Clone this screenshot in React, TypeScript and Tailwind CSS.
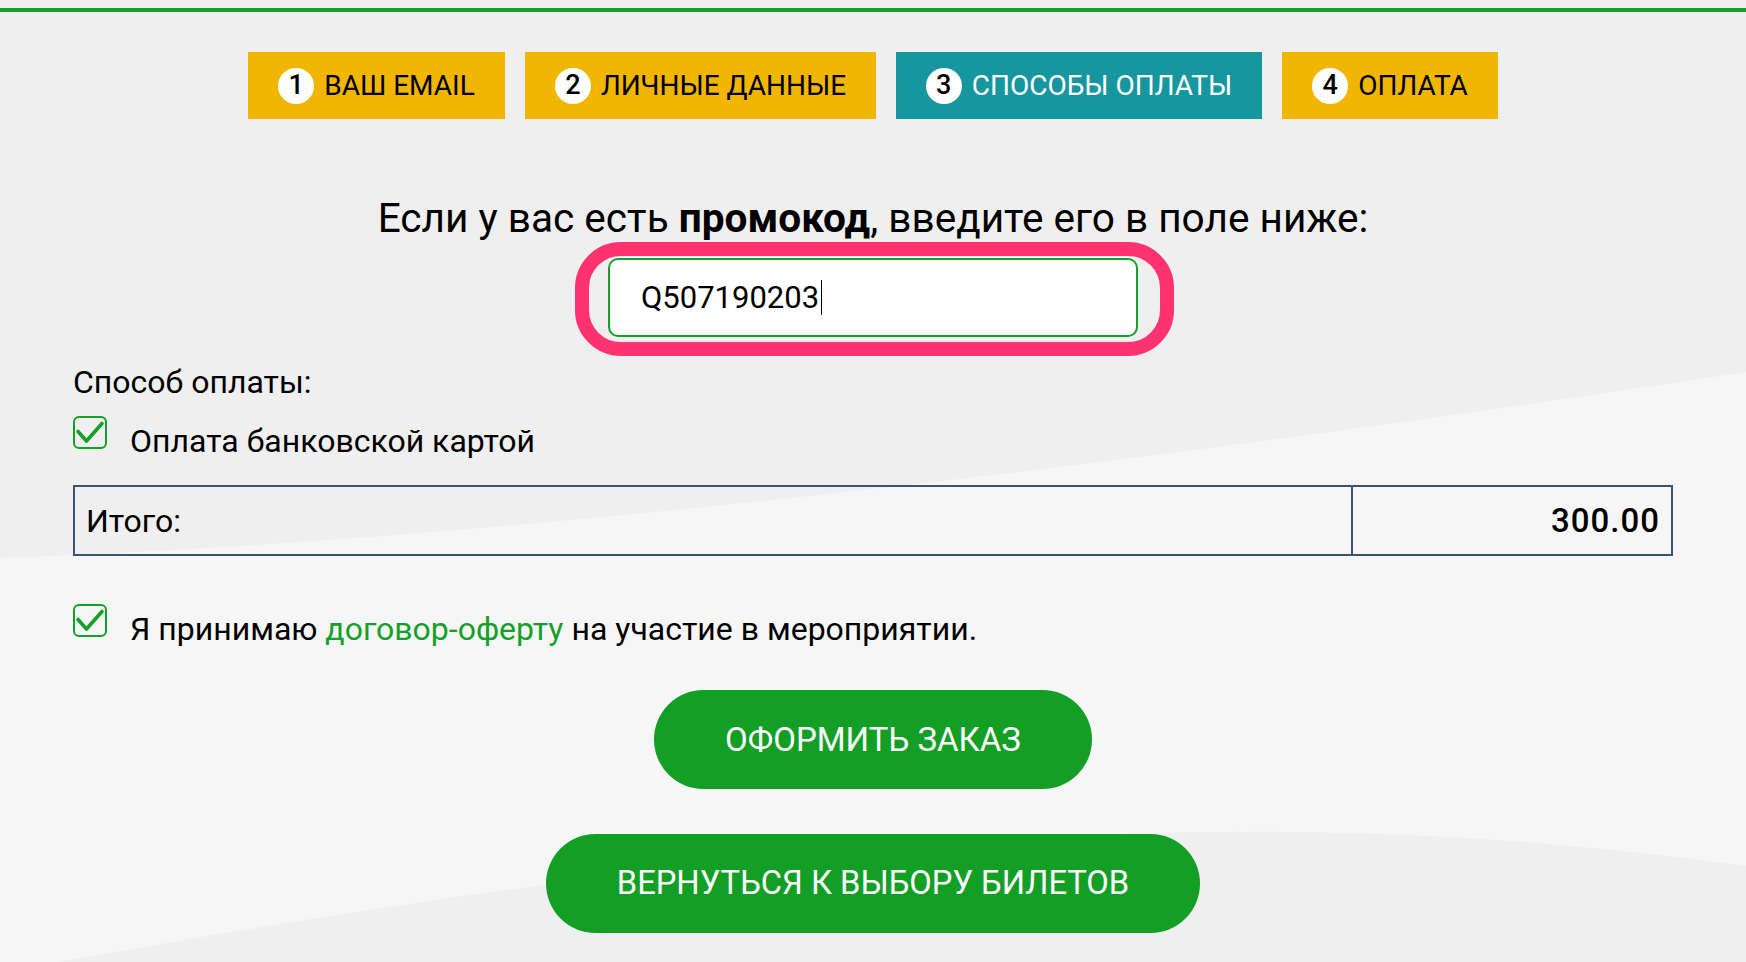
import React from "react";

type Step = { n: number; label: string; box: string; text: string };

const steps: Step[] = [
  { n: 1, label: "ВАШ EMAIL", box: "w-[257px] bg-[#f1b601]", text: "text-black" },
  { n: 2, label: "ЛИЧНЫЕ ДАННЫЕ", box: "w-[351px] bg-[#f1b601]", text: "text-black" },
  { n: 3, label: "СПОСОБЫ ОПЛАТЫ", box: "w-[366px] bg-[#16969f]", text: "text-white" },
  { n: 4, label: "ОПЛАТА", box: "w-[216px] bg-[#f1b601]", text: "text-black" },
];

function CheckBox() {
  return (
    <svg width="34" height="33" viewBox="0 0 34 33" className="shrink-0">
      <rect x="1" y="1" width="32" height="31" rx="5" fill="none" stroke="#15a02a" strokeWidth="2" />
      <path d="M5 15.5 L13.5 25 L29 7.5" fill="none" stroke="#15a02a" strokeWidth="3.6" strokeLinecap="round" strokeLinejoin="round" />
    </svg>
  );
}

export default function App() {
  return (
    <div className="relative min-h-[962px] w-full overflow-hidden bg-[#efefef] font-[family-name:Roboto,'Liberation_Sans',sans-serif] text-black">
      <svg
        className="pointer-events-none absolute inset-0 h-[962px] w-full"
        viewBox="0 0 1746 962"
        preserveAspectRatio="none"
      >
        <path
          d="M0 558 C500 540 1100 470 1746 372 L1746 866 C1550 838 1350 828 1150 833 C800 842 400 900 60 962 L0 962 Z"
          fill="#f6f6f6"
        />
      </svg>

      <div className="relative">
        <div className="h-[8px]" />
        <div className="h-[4px] bg-[#15a02a]" />

        {/* Steps */}
        <div className="mt-[40px] flex justify-center gap-[20px]">
          {steps.map((s) => (
            <div key={s.n} className={`flex h-[67px] items-center justify-center gap-[10px] ${s.box}`}>
              <span className="flex h-[36px] w-[36px] items-center justify-center rounded-full bg-white text-[27px] font-medium leading-none text-black">
                {s.n}
              </span>
              <span className={`text-[28px] leading-none ${s.text}`}>{s.label}</span>
            </div>
          ))}
        </div>

        {/* Promo heading */}
        <div className="mt-[76px] h-[46px] text-center text-[40.6px] leading-[46px]">
          Если у вас есть <span className="font-bold">промокод</span>, введите его в поле ниже:
        </div>

        {/* Promo input */}
        <div className="mt-[17px] flex justify-center">
          <div className="relative h-[79px] w-[530px]">
            <div className="flex h-full w-full items-center rounded-[10px] border-2 border-[#15a02a] bg-white pl-[31px] text-[31px] leading-none">
              <span>Q507190203</span>
              <span className="ml-[2px] inline-block h-[35px] w-px bg-black" />
            </div>
            <div className="pointer-events-none absolute -bottom-[19px] -left-[33px] -right-[36px] -top-[16px] rounded-[46px] border-[14px] border-[#ff3370]" />
          </div>
        </div>

        <div className="px-[73px]">
          <div className="mt-[29px] text-[32px] leading-[32px]">Способ оплаты:</div>

          <div className="mt-[18px] flex items-start gap-[23px]">
            <CheckBox />
            <span className="mt-[6px] text-[32px] leading-[38px]">Оплата банковской картой</span>
          </div>

          {/* Total table */}
          <div className="mt-[25px] flex h-[71px] border-2 border-[#3e5272]">
            <div className="flex flex-1 items-center pl-[11px] text-[32px]">Итого:</div>
            <div className="flex w-[320px] items-center justify-end border-l-2 border-[#3e5272] pr-[11px] text-[33px] font-medium tracking-[1px]">
              300.00
            </div>
          </div>

          <div className="mt-[48px] flex items-start gap-[23px]">
            <CheckBox />
            <span className="mt-[6px] text-[32px] leading-[38px]">
              Я принимаю <span className="text-[#15a02a]">договор-оферту</span> на участие в мероприятии.
            </span>
          </div>

          <div className="mt-[42px] flex justify-center">
            <button className="flex h-[99px] w-[438px] items-center justify-center rounded-full bg-[#139f26] text-[33px] text-white">
              ОФОРМИТЬ ЗАКАЗ
            </button>
          </div>

          <div className="mt-[45px] flex justify-center">
            <button className="flex h-[99px] w-[654px] items-center justify-center rounded-full bg-[#139f26] text-[32.7px] text-white">
              ВЕРНУТЬСЯ К ВЫБОРУ БИЛЕТОВ
            </button>
          </div>
        </div>
      </div>
    </div>
  );
}
